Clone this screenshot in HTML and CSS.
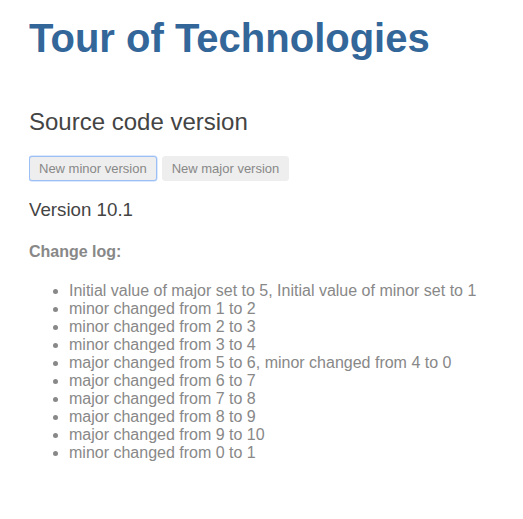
FILE: index.html
```html
<!DOCTYPE html>
<html lang="en">
<head>
  <meta charset="UTF-8">
  <meta name="viewport" content="width=device-width, initial-scale=1.0">
  <title>Tour of Technologies</title>
  <link rel="stylesheet" href="styles.css">
</head>
<body>
  <h1>Tour of Technologies</h1>

  <!-- version panel -->
  <div class="version-panel">
    <h2>Source code version</h2>
    <div class="actions">
      <button class="selected">New minor version</button>
      <button>New major version</button>
    </div>
    <h3>Version 10.1</h3>
    <h4>Change log:</h4>
    <ul class="changelog">
      <li>Initial value of major set to 5, Initial value of minor set to 1</li>
      <li>minor changed from 1 to 2</li>
      <li>minor changed from 2 to 3</li>
      <li>minor changed from 3 to 4</li>
      <li>major changed from 5 to 6, minor changed from 4 to 0</li>
      <li>major changed from 6 to 7</li>
      <li>major changed from 7 to 8</li>
      <li>major changed from 8 to 9</li>
      <li>major changed from 9 to 10</li>
      <li>minor changed from 0 to 1</li>
    </ul>
  </div>
</body>
</html>
```

FILE: styles.css
```css
* {
  font-family: 'Liberation Sans', Arial, Helvetica, sans-serif;
}

body {
  margin: 16px 29px;
  color: #888;
}

h1 {
  color: #369;
  font-size: 250%;
  margin: 0 0 47px;
}

h2 {
  color: #444;
  font-weight: lighter;
  font-size: 24px;
  margin: 0 0 20px;
}

h3 {
  color: #444;
  font-weight: lighter;
  font-size: 18.72px;
  margin: 18px 0 22px;
}

h4 {
  font-size: 16px;
  margin: 0 0 21px;
}

.actions {
  display: flex;
  gap: 5px;
}

button {
  font-size: 13px;
  color: #888;
  background-color: #eee;
  border: 1px solid #eee;
  padding: 4px 9px;
  border-radius: 3px;
  cursor: pointer;
}

button.selected {
  border-color: #9cc0f6;
  box-shadow: 0 0 0 0.5px #b9d3fa;
}

.changelog {
  margin: 0;
  padding-left: 40px;
}
```
